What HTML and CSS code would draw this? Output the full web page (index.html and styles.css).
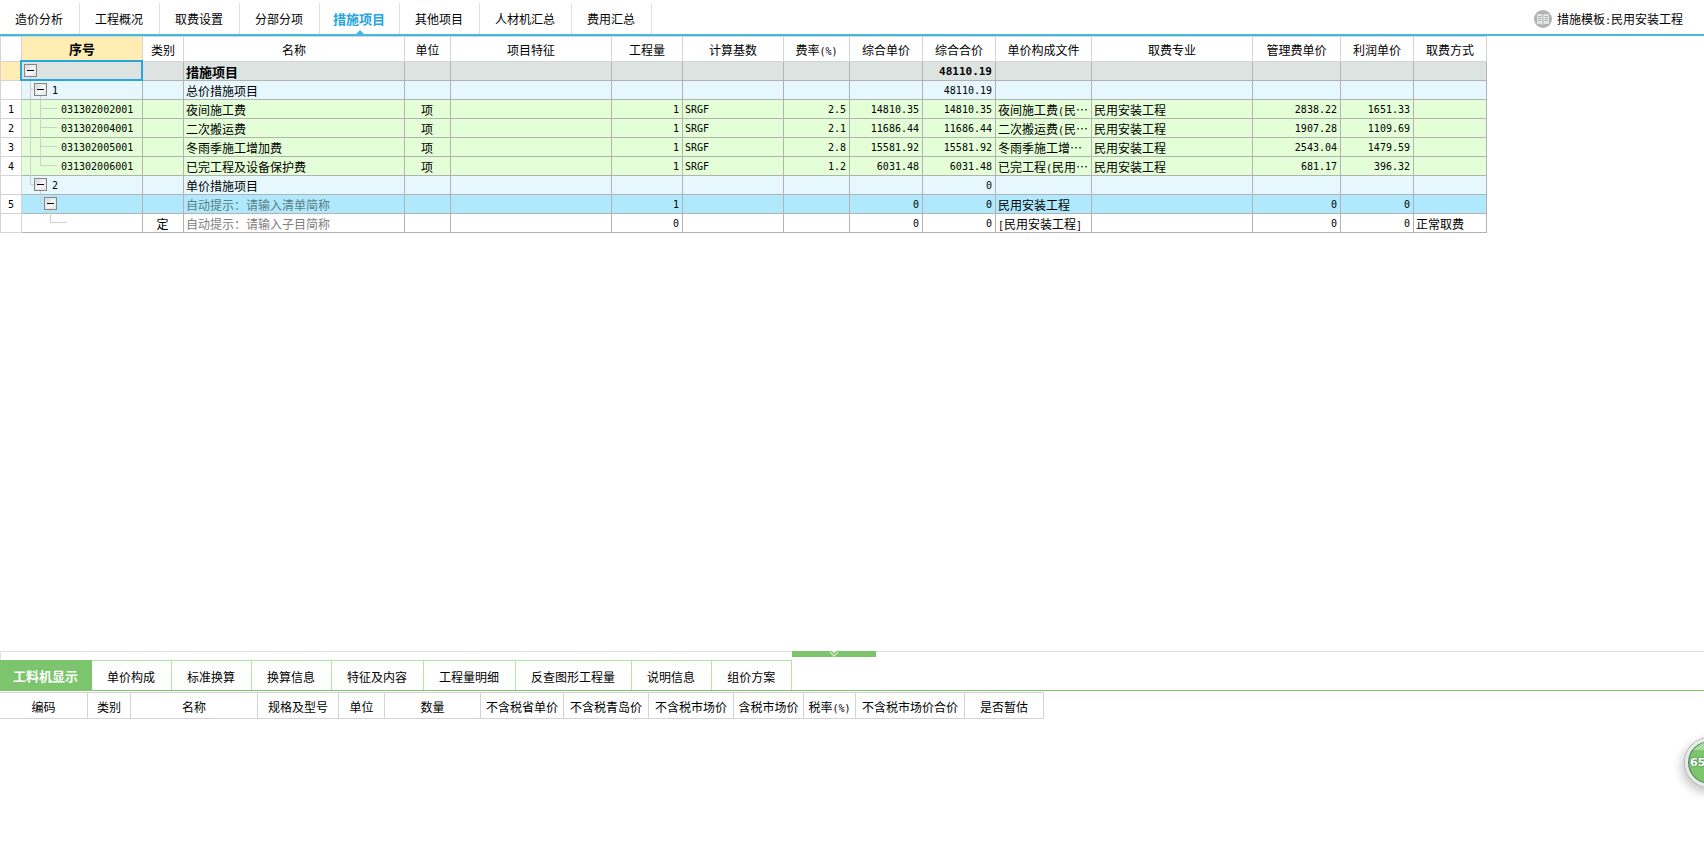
FILE: index.html
```html
<!DOCTYPE html>
<html lang="zh-CN">
<head>
<meta charset="utf-8">
<title>措施项目</title>
<link rel="stylesheet" href="styles.css">
</head>
<body>
<header class="topbar">
  <nav class="tabs">
    <button class="tab">造价分析</button>
    <button class="tab">工程概况</button>
    <button class="tab">取费设置</button>
    <button class="tab">分部分项</button>
    <button class="tab tab-active">措施项目</button>
    <button class="tab">其他项目</button>
    <button class="tab">人材机汇总</button>
    <button class="tab">费用汇总</button>
  </nav>
  <button class="template">
    <svg width="18" height="18" viewBox="0 0 18 18"><circle cx="9" cy="9" r="9" fill="#b3b3b3"/><path d="M3 4.500q3-1 5.500 0v10Q6 13.500 3 14zM15 4.500q-3-1-5.500 0v10q2.500-1 5.500-.5z" fill="#e2e8e6"/><path d="M4 6.500h3.500M4 8.500h3.500M4 10.500h3.500M10.500 6.500H14M10.500 8.500H14M10.500 10.500H14" stroke="#b3b3b3"/></svg>
    <span>措施模板<span class="num">:</span>民用安装工程</span>
  </button>
</header>

<main class="main">
  <table class="grid">
    <colgroup>
      <col class="w22"><col class="w121"><col class="w41"><col class="w221"><col class="w46"><col class="w161"><col class="w71"><col class="w101"><col class="w66"><col class="w73"><col class="w73"><col class="w96"><col class="w161"><col class="w88"><col class="w73"><col class="w73">
    </colgroup>
    <thead>
      <tr><th class="idx"></th><th class="current-col">序号</th><th>类别</th><th>名称</th><th>单位</th><th>项目特征</th><th>工程量</th><th>计算基数</th><th>费率<span class="num">(%)</span></th><th>综合单价</th><th>综合合价</th><th>单价构成文件</th><th>取费专业</th><th>管理费单价</th><th>利润单价</th><th>取费方式</th></tr>
    </thead>
    <tbody>
      <tr class="row-total"><td class="idx current-row"></td><td class="selected"><div class="tree lv1"><svg class="lines" width="60" height="19"><path d="M8.500 15v4"/></svg><button class="toggle" aria-label="折叠"></button></div></td><td></td><td>措施项目</td><td></td><td></td><td></td><td></td><td></td><td></td><td class="num">48110.19</td><td></td><td></td><td></td><td></td><td></td></tr>
      <tr class="row-group"><td class="idx"></td><td><div class="tree lv2"><svg class="lines" width="60" height="19"><path d="M8.500 0v19M8 8.500h4M18.500 15v4"/></svg><button class="toggle" aria-label="折叠"></button><span class="num">1</span></div></td><td></td><td>总价措施项目</td><td></td><td></td><td></td><td></td><td></td><td></td><td class="num">48110.19</td><td></td><td></td><td></td><td></td><td></td></tr>
      <tr class="row-item"><td class="idx num">1</td><td><div class="tree leaf"><svg class="lines" width="60" height="19"><path d="M8.500 0v19M18.500 0v19M18 8.500h17"/></svg><span class="num">031302002001</span></div></td><td></td><td>夜间施工费</td><td class="mid">项</td><td></td><td class="num">1</td><td class="code">SRGF</td><td class="num">2.5</td><td class="num">14810.35</td><td class="num">14810.35</td><td>夜间施工费<span class="num">(</span>民⋯</td><td>民用安装工程</td><td class="num">2838.22</td><td class="num">1651.33</td><td></td></tr>
      <tr class="row-item"><td class="idx num">2</td><td><div class="tree leaf"><svg class="lines" width="60" height="19"><path d="M8.500 0v19M18.500 0v19M18 8.500h17"/></svg><span class="num">031302004001</span></div></td><td></td><td>二次搬运费</td><td class="mid">项</td><td></td><td class="num">1</td><td class="code">SRGF</td><td class="num">2.1</td><td class="num">11686.44</td><td class="num">11686.44</td><td>二次搬运费<span class="num">(</span>民⋯</td><td>民用安装工程</td><td class="num">1907.28</td><td class="num">1109.69</td><td></td></tr>
      <tr class="row-item"><td class="idx num">3</td><td><div class="tree leaf"><svg class="lines" width="60" height="19"><path d="M8.500 0v19M18.500 0v19M18 8.500h17"/></svg><span class="num">031302005001</span></div></td><td></td><td>冬雨季施工增加费</td><td class="mid">项</td><td></td><td class="num">1</td><td class="code">SRGF</td><td class="num">2.8</td><td class="num">15581.92</td><td class="num">15581.92</td><td>冬雨季施工增⋯</td><td>民用安装工程</td><td class="num">2543.04</td><td class="num">1479.59</td><td></td></tr>
      <tr class="row-item"><td class="idx num">4</td><td><div class="tree leaf"><svg class="lines" width="60" height="19"><path d="M8.500 0v19M18.500 0v9M18 8.500h17"/></svg><span class="num">031302006001</span></div></td><td></td><td>已完工程及设备保护费</td><td class="mid">项</td><td></td><td class="num">1</td><td class="code">SRGF</td><td class="num">1.2</td><td class="num">6031.48</td><td class="num">6031.48</td><td>已完工程<span class="num">(</span>民用⋯</td><td>民用安装工程</td><td class="num">681.17</td><td class="num">396.32</td><td></td></tr>
      <tr class="row-group"><td class="idx"></td><td><div class="tree lv2"><svg class="lines" width="60" height="19"><path d="M8.500 0v9M8 8.500h4M18.500 15v4"/></svg><button class="toggle" aria-label="折叠"></button><span class="num">2</span></div></td><td></td><td>单价措施项目</td><td></td><td></td><td></td><td></td><td></td><td></td><td class="num">0</td><td></td><td></td><td></td><td></td><td></td></tr>
      <tr class="row-entry"><td class="idx num">5</td><td><div class="tree lv3"><svg class="lines" width="60" height="19"><path d="M18.500 0v9M18 8.500h4M28.500 15v4"/></svg><button class="toggle" aria-label="折叠"></button></div></td><td></td><td class="hint">自动提示：请输入清单简称</td><td></td><td></td><td class="num">1</td><td></td><td></td><td class="num">0</td><td class="num">0</td><td>民用安装工程</td><td></td><td class="num">0</td><td class="num">0</td><td></td></tr>
      <tr><td class="idx"></td><td><div class="tree leaf"><svg class="lines" width="60" height="19"><path d="M28.500 0v9M28 8.500h17"/></svg></div></td><td class="mid">定</td><td class="hint">自动提示：请输入子目简称</td><td></td><td></td><td class="num">0</td><td></td><td></td><td class="num">0</td><td class="num">0</td><td><span class="num">[</span>民用安装工程<span class="num">]</span></td><td></td><td class="num">0</td><td class="num">0</td><td>正常取费</td></tr>
    </tbody>
  </table>
</main>

<section class="detail">
  <div class="splitter">
    <button class="handle" aria-label="收起"><svg width="10" height="6" viewBox="0 0 10 6"><path d="M3 0h4L5 2z" fill="#fff"/><path d="M1 1l4 4 4-4" fill="none" stroke="#c8ecb8" stroke-width="1.500"/></svg></button>
  </div>
  <nav class="subtabs">
    <button class="subtab subtab-active">工料机显示</button>
    <button class="subtab">单价构成</button>
    <button class="subtab">标准换算</button>
    <button class="subtab">换算信息</button>
    <button class="subtab">特征及内容</button>
    <button class="subtab">工程量明细</button>
    <button class="subtab">反查图形工程量</button>
    <button class="subtab">说明信息</button>
    <button class="subtab">组价方案</button>
  </nav>
  <table class="grid subgrid">
    <colgroup>
      <col class="w88"><col class="w43"><col class="w127"><col class="w81"><col class="w46"><col class="w96"><col class="w83"><col class="w85"><col class="w85"><col class="w70"><col class="w52"><col class="w109"><col class="w79">
    </colgroup>
    <thead>
      <tr><th>编码</th><th>类别</th><th>名称</th><th>规格及型号</th><th>单位</th><th>数量</th><th>不含税省单价</th><th>不含税青岛价</th><th>不含税市场价</th><th>含税市场价</th><th>税率<span class="num">(%)</span></th><th>不含税市场价合价</th><th>是否暂估</th></tr>
    </thead>
  </table>
</section>

<button class="gauge">65</button>
</body>
</html>
```
FILE: styles.css
```css
* {
  box-sizing: border-box;
}

body {
  margin: 0;
  height: 100vh;
  display: flex;
  flex-direction: column;
  overflow: hidden;
  position: relative;
  background: #fff;
  color: #000;
  font: 12px/16px "Noto Sans CJK SC", sans-serif;
}

button {
  margin: 0;
  padding: 0;
  border: 0;
  background: none;
  color: inherit;
  font: inherit;
}

.num,
.code {
  font-family: "DejaVu Sans Mono", monospace;
  font-size: 10px;
}

span.num {
  line-height: 12px;
}

/* top navigation */
.topbar {
  flex: none;
  height: 36px;
  padding: 3px 21px 0 0;
  display: flex;
  justify-content: space-between;
  border-bottom: 2px solid #42b8e2;
}

.tabs {
  display: flex;
}

.tab {
  position: relative;
  padding: 0 16px 0 15px;
  border-right: 1px solid #dce2e2;
}

.tab-active {
  padding: 0 14px 0 13px;
  color: #27a5df;
  font-size: 13px;
  font-weight: bold;
}

.tab-active::after {
  content: "";
  position: absolute;
  left: 50%;
  bottom: 0;
  margin-left: -4px;
  border: 4px solid transparent;
  border-top: 0;
  border-bottom-color: #42b8e2;
}

.template {
  display: flex;
  align-items: center;
  gap: 5px;
}

/* data grids */
.main {
  flex: 1;
  min-height: 0;
  overflow: hidden;
}

.grid {
  table-layout: fixed;
  width: 0;
  border-collapse: separate;
  border-spacing: 0;
  border-top: 1px solid #d4d4d4;
}

.grid th,
.grid td {
  padding: 1px 3px 0 2px;
  border-right: 1px solid #b2b2b2;
  border-bottom: 1px solid #b2b2b2;
  overflow: hidden;
  white-space: nowrap;
}

.grid th {
  height: 25px;
  padding: 2px 0 0;
  border-color: #d4d4d4;
  font-weight: normal;
  text-align: center;
}

.grid td {
  height: 19px;
}

.grid .idx {
  padding: 1px 2px 0;
  border-color: #d4d4d4;
  border-left: 1px solid #d4d4d4;
  background: #fff;
  text-align: center;
}

.grid .current-col {
  padding: 0;
  background: #ffedb4;
  font-size: 13px;
  font-weight: bold;
}

.grid .current-row {
  background: #ffedb4;
}

.grid td.num:not(.idx) {
  text-align: right;
}

.mid {
  text-align: center;
}

.row-total {
  background: #dde3e1;
  font-size: 13px;
  font-weight: bold;
}

.row-total .num {
  font-size: 11px;
}

.row-group {
  background: #e6f8fe;
}

.row-item {
  background: #e4ffd7;
}

.row-entry {
  background: #b0e9fd;
}

.hint {
  color: #808080;
}

.row-entry .hint {
  color: #587f82;
}

.grid td.selected {
  position: relative;
  overflow: visible;
}

.selected::after {
  content: "";
  position: absolute;
  inset: -2px -1px -1px -2px;
  border: 2px solid #27a5df;
  pointer-events: none;
}

/* tree column */
.grid td:nth-child(2) {
  padding: 0;
  overflow: visible;
}

.tree {
  position: relative;
  height: 18px;
  display: flex;
  align-items: center;
  gap: 5px;
}

.tree .num {
  padding-top: 1px;
}

.lv1 {
  padding-left: 2px;
}

.lv2 {
  padding-left: 12px;
}

.lv3 {
  padding-left: 22px;
}

.leaf {
  padding-left: 39px;
}

.lines {
  position: absolute;
  left: 0;
  top: 0;
  fill: none;
  stroke: #cfcfcf;
}

.toggle {
  position: relative;
  width: 13px;
  height: 13px;
  margin-bottom: 2px;
  border: 1px solid #858585;
  background: linear-gradient(135deg, #cdcdcd, #fbfbfb 55%, #ddd);
  box-shadow: inset 0 0 0 1px #e8e8e8;
}

.toggle::after {
  content: "";
  position: absolute;
  left: 2px;
  top: 5px;
  width: 7px;
  height: 1px;
  background: #000;
}

/* column widths */
.w22 { width: 22px; }
.w41 { width: 41px; }
.w43 { width: 43px; }
.w46 { width: 46px; }
.w52 { width: 52px; }
.w66 { width: 66px; }
.w70 { width: 70px; }
.w71 { width: 71px; }
.w73 { width: 73px; }
.w79 { width: 79px; }
.w81 { width: 81px; }
.w83 { width: 83px; }
.w85 { width: 85px; }
.w88 { width: 88px; }
.w96 { width: 96px; }
.w101 { width: 101px; }
.w109 { width: 109px; }
.w121 { width: 121px; }
.w127 { width: 127px; }
.w161 { width: 161px; }
.w221 { width: 221px; }

/* detail pane */
.detail {
  flex: 0 0 214px;
}

.splitter {
  position: relative;
  height: 9px;
  border-top: 1px solid #dde3e3;
  border-left: 1px solid #dde3e3;
}

.handle {
  position: absolute;
  left: 791px;
  top: -1px;
  width: 84px;
  height: 6px;
  display: flex;
  justify-content: center;
  background: #7cc56c;
}

.subtabs {
  height: 31px;
  display: flex;
  border-bottom: 1px solid #7cc56c;
}

.subtab {
  padding: 3px 16px 0 15px;
  border-top: 1px solid #b5e3a3;
  border-right: 1px solid #b5e3a3;
}

.subtab-active {
  padding: 0 13px;
  border-color: #7cc56c;
  background: #7cc56c;
  color: #fff;
  font-size: 13px;
  font-weight: bold;
}

.subgrid {
  margin-top: 1px;
}

.subgrid th {
  height: 26px;
}

/* floating gauge, half outside the window */
.gauge {
  position: absolute;
  right: -30px;
  top: 738px;
  width: 49px;
  height: 49px;
  padding-left: 2px;
  border: 3px solid #e9ebea;
  border-radius: 50%;
  background: linear-gradient(#a8dc9c 0 20%, #7cc56c 21%);
  box-shadow: inset 0 0 0 1px #4f7a68, 0 0 0 1px #b4b8b6, -2px 4px 8px 2px #ccc;
  color: #fff;
  font: bold 11px/16px "DejaVu Sans", sans-serif;
  text-align: left;
  text-shadow: 0 0 2px #3f6f58;
}
```
